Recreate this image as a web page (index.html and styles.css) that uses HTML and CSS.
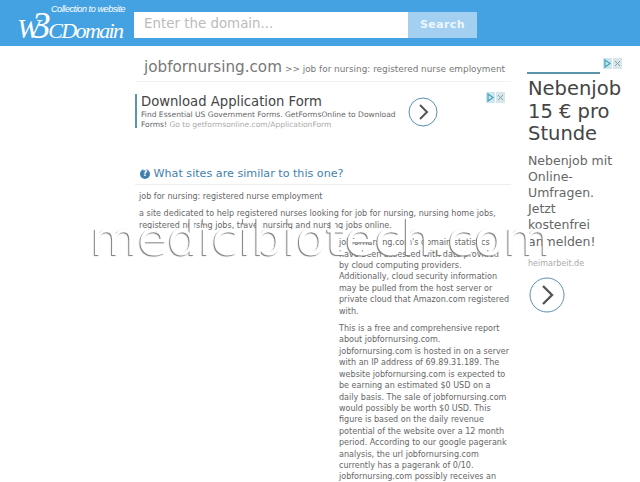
FILE: index.html
```html
<!DOCTYPE html>
<html lang="en">
<head>
    <meta charset="UTF-8">
    <meta name="viewport" content="width=device-width, initial-scale=1.0">
    <title>jobfornursing.com</title>
    <link rel="stylesheet" href="styles.css">
</head>
<body>
    <div class="header">
        <div class="logo">
            <div class="logo-tag">Collection to website</div>
            <div class="logo-name"><span class="logo-w">W</span><span class="logo-three">3</span>CDomain</div>
        </div>
        <div class="search">
            <div class="search-input">Enter the domain...</div>
            <div class="search-button">Search</div>
        </div>
    </div>

    <div class="page">
        <div class="main">
            <div class="title-row">
                <span class="site-name">jobfornursing.com</span>
                <span class="site-sub">&gt;&gt; job for nursing: registered nurse employment</span>
            </div>

            <div class="ad-top">
                <div class="ad-top-text">
                    <div class="ad-top-title">Download Application Form</div>
                    <div class="ad-top-desc">Find Essential US Government Forms. GetFormsOnline to Download Forms! <span class="ad-url">Go to getformsonline.com/ApplicationForm</span></div>
                </div>
                <svg class="arrow arrow-small" viewBox="0 0 30 30">
                    <circle cx="15" cy="15" r="14" fill="none" stroke="#5b8fb0" stroke-width="1"/>
                    <path d="M12 8 L19 15 L12 22" fill="none" stroke="#555" stroke-width="2"/>
                </svg>
                <svg class="ad-icons" viewBox="0 0 19 11">
                    <rect width="9" height="11" fill="#cfe6ec"/>
                    <path d="M2 2 L7 5.5 L2 9 Z" fill="none" stroke="#3fa3bd" stroke-width="1.2"/>
                    <rect x="10" width="9" height="11" fill="#d8e6ea"/>
                    <path d="M12 3 L17 8 M17 3 L12 8" stroke="#7fa3b0" stroke-width="1"/>
                </svg>
            </div>

            <h2 class="question"><span class="question-icon">?</span> What sites are similar to this one?</h2>
            <p class="lead">job for nursing: registered nurse employment</p>
            <p class="para">a site dedicated to help registered nurses looking for job for nursing, nursing home jobs, registered nursing jobs, travel nursing and nursing jobs online.</p>

            <div class="blank-ad"></div>
            <p class="para">jobfornursing.com's domain statistics have been assessed with data provided by cloud computing providers. Additionally, cloud security information may be pulled from the host server or private cloud that Amazon.com registered with.</p>
            <p class="para">This is a free and comprehensive report about jobfornursing.com. jobfornursing.com is hosted in on a server with an IP address of 69.89.31.189. The website jobfornursing.com is expected to be earning an estimated $0 USD on a daily basis. The sale of jobfornursing.com would possibly be worth $0 USD. This figure is based on the daily revenue potential of the website over a 12 month period. According to our google pagerank analysis, the url jobfornursing.com currently has a pagerank of 0/10. jobfornursing.com possibly receives an</p>
        </div>

        <div class="side">
            <svg class="ad-icons side-icons" viewBox="0 0 19 11">
                <rect width="9" height="11" fill="#cfe6ec"/>
                <path d="M2 2 L7 5.5 L2 9 Z" fill="none" stroke="#3fa3bd" stroke-width="1.2"/>
                <rect x="10" width="9" height="11" fill="#d8e6ea"/>
                <path d="M12 3 L17 8 M17 3 L12 8" stroke="#7fa3b0" stroke-width="1"/>
            </svg>
            <div class="side-rule"></div>
            <div class="side-title">Nebenjob 15 € pro Stunde</div>
            <div class="side-desc">Nebenjob mit Online-Umfragen. Jetzt kostenfrei anmelden!</div>
            <div class="side-url">heimarbeit.de</div>
            <svg class="arrow arrow-big" viewBox="0 0 36 36">
                <circle cx="18" cy="18" r="17" fill="none" stroke="#5b8fb0" stroke-width="1"/>
                <path d="M14 9 L23 18 L14 27" fill="none" stroke="#555" stroke-width="2.4"/>
            </svg>
        </div>
    </div>

    <div class="watermark">medicibiotech.com</div>
</body>
</html>
```

FILE: styles.css
```css
html, body {
    margin: 0;
    height: 482px;
    overflow: hidden;
}
body {
    font-family: "DejaVu Sans", sans-serif;
    background-color: #fff;
    color: #666;
    position: relative;
}
.header {
    height: 46px;
    background-color: #45a2e2;
    display: flex;
}
.logo {
    width: 134px;
    height: 46px;
    color: #fff;
    font-family: "Liberation Serif", serif;
    font-style: italic;
    padding-left: 17px;
    box-sizing: border-box;
    overflow: hidden;
}
.logo-tag {
    font-family: "Liberation Sans", sans-serif;
    font-size: 9px;
    letter-spacing: -0.4px;
    margin: 4px 0 0 34px;
    line-height: 11px;
    white-space: nowrap;
}
.logo-name {
    font-size: 22px;
    line-height: 24px;
    letter-spacing: -1.6px;
    white-space: nowrap;
}
.logo-w {
    font-size: 28px;
}
.logo-three {
    font-size: 38px;
    line-height: 20px;
    margin: 0 -1px 0 -7px;
}
.search {
    display: flex;
    margin-top: 12px;
    height: 26px;
}
.search-input {
    width: 264px;
    height: 26px;
    line-height: 23px;
    padding-left: 10px;
    background: #fff;
    color: #bbb;
    font-size: 13.4px;
}
.search-button {
    width: 69px;
    height: 26px;
    line-height: 26px;
    text-align: center;
    background-color: #a3d0f0;
    color: #eef6fc;
    font-size: 11px;
    font-weight: bold;
    letter-spacing: 0.4px;
}
.page {
    display: flex;
}
.main {
    width: 376px;
    margin-left: 135px;
}
.title-row {
    height: 36px;
    box-sizing: border-box;
    padding: 11px 0 0 9px;
    border-bottom: 1px solid #f2f2f2;
    white-space: nowrap;
}
.site-name {
    font-size: 15.2px;
    color: #777;
}
.site-sub {
    font-size: 8.9px;
    color: #777;
    margin-left: -2px;
}
.ad-top {
    position: relative;
    height: 34px;
    margin-top: 12px;
    width: 370px;
    border-left: 2px solid #5c93ad;
    box-sizing: border-box;
    padding-left: 4px;
    display: flex;
}
.ad-top-text {
    width: 268px;
}
.ad-top-title {
    font-size: 13.2px;
    line-height: 16px;
    color: #444;
}
.ad-top-desc {
    font-size: 7.55px;
    line-height: 9.5px;
    color: #666;
}
.ad-url {
    color: #aaa;
}
.arrow {
    display: block;
}
.arrow-small {
    width: 30px;
    height: 30px;
    margin: 3px 0 0 -1px;
}
.ad-icons {
    width: 19px;
    height: 11px;
    position: absolute;
    right: 0;
    top: -2px;
}
.question {
    font-size: 11.15px;
    font-weight: normal;
    color: #3f7fae;
    margin: 38px 0 0 0;
    padding: 0 0 3px 5px;
    line-height: 15px;
    border-bottom: 1px solid #eee;
}
.question-icon {
    display: inline-block;
    width: 10px;
    height: 10px;
    line-height: 10px;
    border-radius: 50%;
    background-color: #3f7fae;
    color: #fff;
    font-size: 8px;
    font-weight: bold;
    text-align: center;
    vertical-align: 1px;
}
.lead, .para {
    font-size: 8.05px;
    line-height: 11.4px;
    margin: 0 0 6px 4px;
}
.lead {
    margin-top: 6px;
    margin-bottom: 6px;
}
.blank-ad {
    float: left;
    width: 200px;
    height: 250px;
    margin-left: 4px;
}
.side {
    position: relative;
    width: 95px;
    margin-left: 16px;
    padding-top: 26px;
}
.side-icons {
    top: 12px;
    right: 0;
}
.side-rule {
    width: 73px;
    height: 2px;
    background-color: #5c93ad;
}
.side-title {
    font-size: 19.5px;
    line-height: 22.5px;
    color: #444;
    margin: 4px 0 0 1px;
}
.side-desc {
    font-size: 12.5px;
    line-height: 16.2px;
    color: #666;
    width: 90px;
    margin: 7px 0 0 1px;
}
.side-url {
    font-size: 8px;
    color: #aaa;
    margin: 9px 0 0 1px;
}
.arrow-big {
    width: 36px;
    height: 36px;
    margin: 9px 0 0 2px;
}
.watermark {
    position: absolute;
    left: 90.5px;
    top: 198px;
    font-family: "DejaVu Sans", sans-serif;
    font-size: 48.5px;
    line-height: 80px;
    color: #fff;
    text-shadow: -1px 1px 1px #777;
    white-space: nowrap;
}
```
